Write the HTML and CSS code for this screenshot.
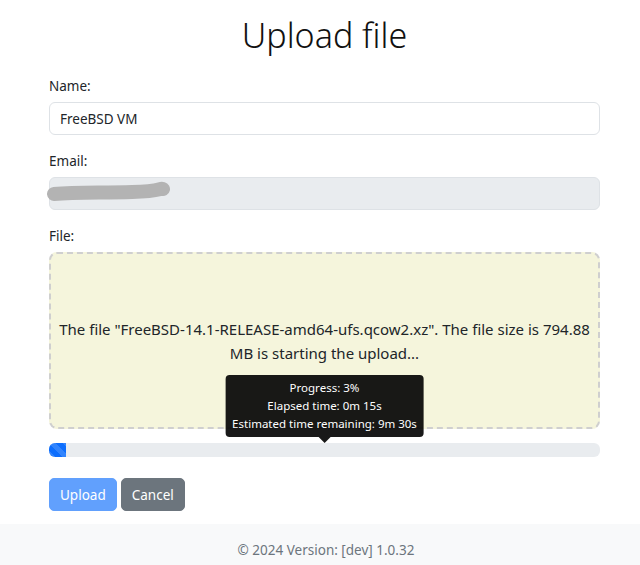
FILE: index.html
```html
<!DOCTYPE html>
<html lang="en">
<head>
<meta charset="UTF-8">
<meta name="viewport" content="width=device-width, initial-scale=1.0">
<title>Upload file</title>
<link rel="stylesheet" href="styles.css">
</head>
<body>

<div class="container">
    <h1>Upload file</h1>

    <div class="group">
        <label for="name">Name:</label>
        <input type="text" id="name" class="control" value="FreeBSD VM">
    </div>

    <div class="group">
        <label for="email">Email:</label>
        <div class="control disabled">
            <svg class="redact" width="130" height="26" viewBox="0 0 130 26">
                <path d="M7 16 C 30 14, 55 15, 85 14 S 112 10, 116 11" stroke="#b3b3b3" stroke-width="14" stroke-linecap="round" fill="none"/>
            </svg>
        </div>
    </div>

    <div class="group">
        <label>File:</label>
        <div class="dropzone">
            <p>The file "FreeBSD-14.1-RELEASE-amd64-ufs.qcow2.xz". The file size is 794.88 MB is starting the upload...</p>
        </div>
    </div>

    <div class="progress-wrap">
        <div class="tip">
            Progress: 3%<br>
            Elapsed time: 0m 15s<br>
            Estimated time remaining: 9m 30s
        </div>
        <div class="progress">
            <div class="progress-bar" style="width: 3%"></div>
        </div>
    </div>

    <div class="buttons">
        <button class="btn btn-primary" disabled>Upload</button>
        <button class="btn btn-secondary">Cancel</button>
    </div>
</div>

<footer class="footer">
    © 2024 Version: [dev] 1.0.32
</footer>

</body>
</html>
```

FILE: styles.css
```css
body {
    font-family: "Noto Sans", "Open Sans", sans-serif;
    font-size: 13.5px;
    color: #212529;
    background-color: #fff;
    margin: 0;
    padding: 0;
}

.container {
    padding: 0 40px 0 49px;
}

h1 {
    font-size: 34px;
    font-weight: 300;
    text-align: center;
    line-height: 43px;
    margin: 14px 0 17px;
    color: #111;
}

.group {
    margin-bottom: 14px;
}

label {
    display: block;
    line-height: 24px;
    margin-bottom: 4px;
}

.control {
    display: block;
    box-sizing: border-box;
    width: 100%;
    height: 33px;
    padding: 0 10px;
    font-family: inherit;
    font-size: 13.5px;
    color: #212529;
    border: 1px solid #dee2e6;
    border-radius: 6px;
    background-color: #fff;
    outline: none;
}

.control.disabled {
    background-color: #e9ecef;
    padding: 0;
    position: relative;
}

.redact {
    position: absolute;
    left: -3px;
    top: 0;
}

.dropzone {
    box-sizing: border-box;
    height: 177px;
    display: flex;
    align-items: center;
    justify-content: center;
    padding: 0 8px;
    background-color: #f5f5dc;
    border: 2px dashed #cfcfcf;
    border-radius: 8px;
    text-align: center;
}

.dropzone p {
    margin: 0;
    font-size: 15px;
    line-height: 24px;
}

.progress-wrap {
    position: relative;
}

.progress {
    height: 14px;
    background-color: #e9ecef;
    border-radius: 6px;
    overflow: hidden;
}

.progress-bar {
    height: 100%;
    background-color: #0d6efd;
    background-image: linear-gradient(45deg, rgba(255,255,255,.15) 25%, transparent 25%, transparent 50%, rgba(255,255,255,.15) 50%, rgba(255,255,255,.15) 75%, transparent 75%, transparent);
    background-size: 14px 14px;
}

.tip {
    position: absolute;
    bottom: calc(100% + 6px);
    left: 50%;
    transform: translateX(-50%);
    white-space: nowrap;
    padding: 4px 7px;
    font-size: 11.5px;
    line-height: 18px;
    color: #fff;
    text-align: center;
    background-color: rgba(0, 0, 0, .9);
    border-radius: 4px;
}

.tip::after {
    content: "";
    position: absolute;
    top: 100%;
    left: 50%;
    margin-left: -6px;
    border: 6px solid transparent;
    border-top-color: rgba(0, 0, 0, .9);
    border-bottom: 0;
}

.buttons {
    display: flex;
    gap: 4px;
    margin-top: 21px;
    margin-bottom: 13px;
}

.btn {
    height: 33px;
    padding: 0 10px;
    font-family: inherit;
    font-size: 13.5px;
    color: #fff;
    border: 1px solid transparent;
    border-radius: 5px;
    cursor: pointer;
}

.btn-primary {
    background-color: #0d6efd;
    border-color: #0d6efd;
}

.btn-primary:disabled {
    opacity: .65;
    cursor: default;
}

.btn-secondary {
    background-color: #6c757d;
    border-color: #6c757d;
}

.footer {
    background-color: #f8f9fa;
    color: #6c757d;
    text-align: center;
    height: 41px;
    line-height: 52px;
    padding: 0 40px 0 52px;
}
```
